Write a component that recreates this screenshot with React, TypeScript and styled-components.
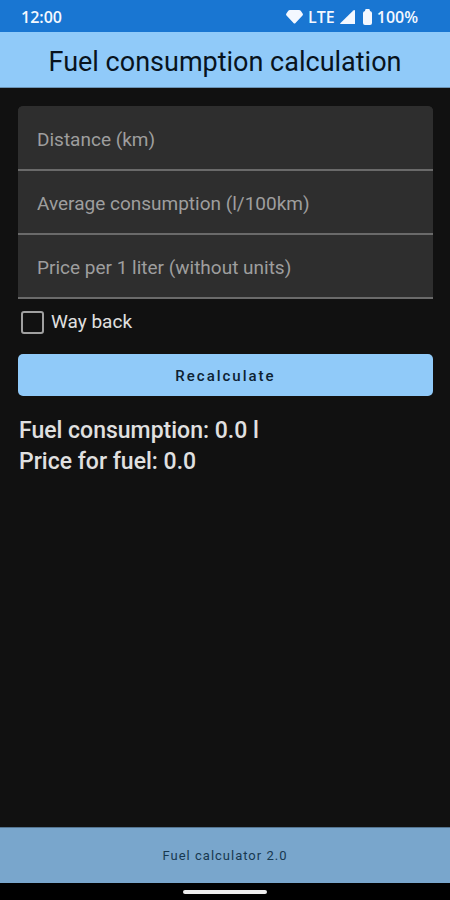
import React, { useState } from "react";
import styled, { createGlobalStyle } from "styled-components";

const GlobalStyle = createGlobalStyle`
  *, *::before, *::after { box-sizing: border-box; }
  body { margin: 0; background: #111111; font-family: Roboto, sans-serif; }
`;

const Screen = styled.div`
  display: flex;
  flex-direction: column;
  min-height: 100vh;
  background: #111111;
  color: #e0e0e0;
`;

const StatusBar = styled.div`
  display: flex;
  align-items: center;
  justify-content: space-between;
  height: 32px;
  padding: 2px 32px 0 21px;
  background: #1976d2;
  color: #f4f8ff;
  font: 600 16px/20px "Open Sans", sans-serif;
`;

const StatusIcons = styled.div`
  display: flex;
  align-items: center;
  gap: 5px;
  svg { display: block; fill: currentColor; }
`;

const TopBar = styled.header`
  display: flex;
  align-items: center;
  justify-content: center;
  height: 56px;
  padding-top: 4px;
  background: #90caf9;
  border-bottom: 1px solid #6b93b5;
`;

const Title = styled.h1`
  margin: 0;
  color: #08131d;
  font-size: 27px;
  line-height: 36px;
  font-weight: 400;
`;

const Content = styled.main`
  flex: 1;
  padding: 18px 17px 18px 18px;
`;

const Fields = styled.div`
  overflow: hidden;
  padding-top: 1px;
  border-radius: 5px 5px 0 0;
  background: #2e2e2e;
`;

const Field = styled.input`
  display: block;
  width: 100%;
  height: 64px;
  padding: 3px 19px 0;
  border: 0;
  border-bottom: 2px solid #6a6a6a;
  border-radius: 0;
  outline: 0;
  background: #2e2e2e;
  color: #e0e0e0;
  font: 400 19px/24px Roboto, sans-serif;
  &::placeholder { color: #9e9e9e; opacity: 1; }
  &:focus { border-bottom-color: #90caf9; }
`;

const CheckRow = styled.label`
  display: flex;
  align-items: center;
  gap: 7px;
  margin: 11px 0 20px 3px;
  font-size: 19px;
  line-height: 24px;
`;

const CheckBox = styled.input`
  appearance: none;
  width: 23px;
  height: 23px;
  margin: 0;
  border: 2px solid #a0a0a0;
  border-radius: 3px;
  background: transparent;
  &:checked { background: #90caf9; border-color: #90caf9; }
`;

const Button = styled.button`
  display: block;
  width: 100%;
  height: 42px;
  padding: 2px 0 0;
  border: 0;
  border-radius: 5px;
  background: #90caf9;
  color: #0d2233;
  font: 500 15px/24px Roboto, sans-serif;
  letter-spacing: 2px;
`;

const Results = styled.div`
  margin-top: 19px;
  padding: 0 1px;
  font-size: 23px;
  line-height: 31px;
  font-weight: 500;
`;

const Result = styled.p`
  margin: 0;
`;

const Footer = styled.footer`
  display: flex;
  align-items: center;
  justify-content: center;
  height: 56px;
  background: #79a6cc;
  border-top: 1px solid #557590;
  color: #173850;
  font-size: 13px;
  line-height: 20px;
  letter-spacing: 1px;
`;

const NavBar = styled.div`
  display: flex;
  align-items: center;
  justify-content: center;
  height: 17px;
  padding-top: 1px;
  background: #000000;
`;

const HomeHandle = styled.div`
  width: 84px;
  height: 4px;
  border-radius: 2px;
  background: #eeeeee;
`;

const FIELDS = [
  { key: "distance", label: "Distance (km)" },
  { key: "average", label: "Average consumption (l/100km)" },
  { key: "price", label: "Price per 1 liter (without units)" },
];

const format = (n: number) => {
  const rounded = Math.round(n * 100) / 100 || 0;
  return Number.isInteger(rounded) ? rounded.toFixed(1) : String(rounded);
};

export default function App() {
  const [values, setValues] = useState<Record<string, string>>({});
  const [wayBack, setWayBack] = useState(false);
  const [fuel, setFuel] = useState(0);
  const [cost, setCost] = useState(0);

  const recalculate = () => {
    const distance = Number(values.distance || 0) * (wayBack ? 2 : 1);
    const used = (distance * Number(values.average || 0)) / 100;
    setFuel(used);
    setCost(used * Number(values.price || 0));
  };

  return (
    <>
      <GlobalStyle />
      <Screen>
        <StatusBar>
          <span>12:00</span>
          <StatusIcons>
            <svg width="17" height="14" viewBox="0 0 17 14" aria-hidden="true">
              <path d="M4 0h9q1.200 0 1.900 1l1.700 2.500q.7 1-.1 1.900L9.500 13q-1 1-2 0L.5 5.400Q-.3 4.500.4 3.500L2.100 1Q2.800 0 4 0z" />
            </svg>
            <span>LTE</span>
            <svg width="18" height="14" viewBox="0 0 18 14" aria-hidden="true">
              <path d="M14.200 0q.8 0 .8.800V14H.9Q-.3 14 .5 13L13.300.400q.5-.4.9-.4z" />
            </svg>
            <svg width="9" height="16" viewBox="0 0 9 16" aria-hidden="true">
              <path d="M3 0h3q.6 0 .8 1L7 2q2 .5 2 2v10q0 2-2 2H2q-2 0-2-2V4q0-1.500 2-2l.2-1Q2.400 0 3 0z" />
            </svg>
            <span>100%</span>
          </StatusIcons>
        </StatusBar>
        <TopBar>
          <Title>Fuel consumption calculation</Title>
        </TopBar>
        <Content>
          <Fields>
            {FIELDS.map(({ key, label }) => (
              <Field
                key={key}
                inputMode="decimal"
                aria-label={label}
                placeholder={label}
                value={values[key] || ""}
                onChange={(e) => setValues({ ...values, [key]: e.target.value })}
              />
            ))}
          </Fields>
          <CheckRow>
            <CheckBox
              type="checkbox"
              checked={wayBack}
              onChange={(e) => setWayBack(e.target.checked)}
            />
            Way back
          </CheckRow>
          <Button type="button" onClick={recalculate}>Recalculate</Button>
          <Results>
            <Result>Fuel consumption: {format(fuel)} l</Result>
            <Result>Price for fuel: {format(cost)}</Result>
          </Results>
        </Content>
        <Footer>Fuel calculator 2.0</Footer>
        <NavBar>
          <HomeHandle />
        </NavBar>
      </Screen>
    </>
  );
}
